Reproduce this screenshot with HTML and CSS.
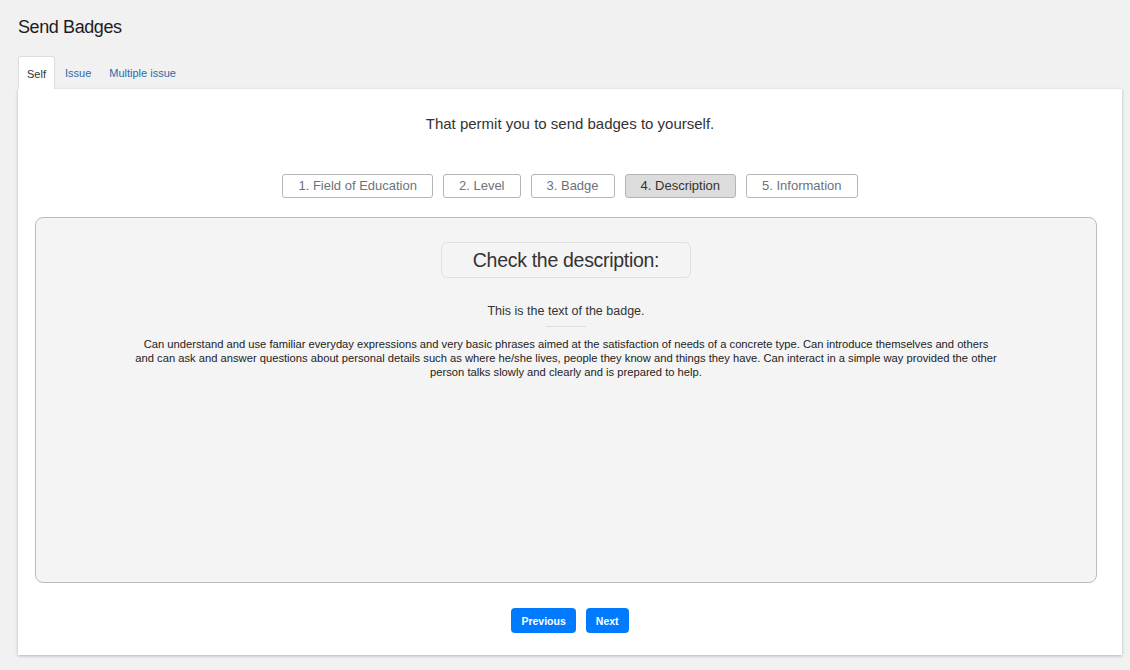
FILE: index.html
```html
<!DOCTYPE html>
<html>
<head>
<meta charset="utf-8">
<link rel="stylesheet" href="styles.css">
</head>
<body>
<div class="page">
  <h1 class="title">Send Badges</h1>
  <div class="tabs">
    <div class="tab active">Self</div>
    <div class="tab">Issue</div>
    <div class="tab">Multiple issue</div>
  </div>
  <div class="panel">
    <p class="intro">That permit you to send badges to yourself.</p>
    <div class="steps">
      <div class="step">1. Field of Education</div>
      <div class="step">2. Level</div>
      <div class="step">3. Badge</div>
      <div class="step current">4. Description</div>
      <div class="step">5. Information</div>
    </div>
    <div class="box">
      <div class="box-title">Check the description:</div>
      <p class="sub">This is the text of the badge.</p>
      <div class="rule"></div>
      <p class="desc">Can understand and use familiar everyday expressions and very basic phrases aimed at the satisfaction of needs of a concrete type. Can introduce themselves and others and can ask and answer questions about personal details such as where he/she lives, people they know and things they have. Can interact in a simple way provided the other person talks slowly and clearly and is prepared to help.</p>
    </div>
    <div class="nav">
      <button class="btn">Previous</button>
      <button class="btn">Next</button>
    </div>
  </div>
</div>
</body>
</html>
```
FILE: styles.css
```css
* { box-sizing: border-box; }
html, body { margin: 0; padding: 0; background: #f1f1f1; }
body { font-family: "Liberation Sans", Arial, sans-serif; color: #222; }
.page { padding: 15px 8px 15px 18px; }
.title { margin: 0; font-size: 18px; font-weight: 400; line-height: 24px; color: #1d1d1f; letter-spacing: -0.4px; }
.tabs { display: flex; margin-top: 17px; height: 33px; }
.tab { padding: 0 8px; font-size: 11px; line-height: 33px; color: #2a6aa8; padding-top: 1px; margin-right: 2px; }
.tab.active { background: #fff; color: #333; border: 1px solid #ddd; border-bottom: none; border-radius: 3px 3px 0 0; }
.panel { background: #fff; box-shadow: 0 1px 3px rgba(0,0,0,0.25); padding: 25px 0 22px; }
.intro { margin: 0; text-align: center; font-size: 15px; color: #333; line-height: 20px; }
.steps { display: flex; justify-content: center; gap: 10px; margin-top: 40px; }
.step { height: 24px; line-height: 22px; padding: 0 15px; font-size: 13px; color: #6d7278; border: 1px solid #b5b5b5; border-radius: 3px; background: #fff; }
.step.current { background: #dcdcdc; color: #333; }
.box { margin: 19px 25px 0 17px; height: 366px; background: #f4f4f4; border: 1px solid #bcbcbc; border-radius: 8px; display: flex; flex-direction: column; align-items: center; padding-top: 24px; }
.box-title { width: 250px; height: 36px; line-height: 34px; text-align: center; font-size: 19.5px; color: #333; border: 1px solid #e0e0e0; border-radius: 6px; letter-spacing: -0.3px; }
.sub { margin: 25px 0 0; font-size: 12.5px; color: #333; line-height: 16px; }
.rule { width: 40px; height: 1px; background: #ddd; margin-top: 7px; }
.desc { margin: 10px 0 0; width: 863px; text-align: center; font-size: 11.2px; line-height: 14px; color: #222; }
.nav { display: flex; justify-content: center; gap: 10px; margin-top: 25px; }
.btn { height: 25px; padding: 0 10px; border: none; border-radius: 4px; background: #007bff; color: #fff; font-family: "Liberation Sans", Arial, sans-serif; font-weight: 700; font-size: 10.5px; }
```
